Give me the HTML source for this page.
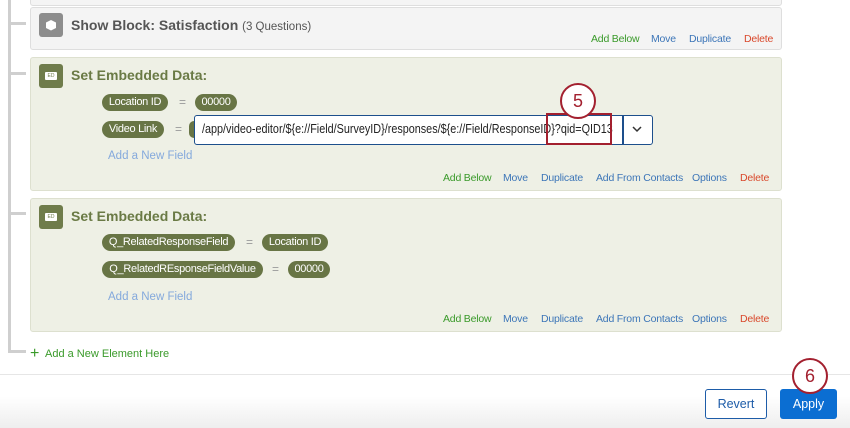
<!DOCTYPE html>
<html><head><style>
body{margin:0;width:850px;height:427px;overflow:hidden;background:#fff;font-family:"Liberation Sans",sans-serif;position:relative}
.a{position:absolute}
.blk{position:absolute;left:30px;width:750px;border:1px solid #dcdcd4;border-radius:3px}
.g{background:#f4f4f4;border-color:#dedede}
.e{background:#eef0e5;border-color:#dde0cf}
.ic{position:absolute;left:8px;width:24px;height:24px;border-radius:3px}
.t{position:absolute;left:40px;font-size:14px;font-weight:bold}
.pill{position:absolute;height:17px;line-height:17px;background:#687545;color:#fff;font-size:11px;letter-spacing:-0.3px;border-radius:9px;text-align:center;white-space:nowrap;overflow:hidden}
.eq{position:absolute;color:#999;font-size:12px}
.lk{position:absolute;font-size:10.5px;white-space:nowrap;letter-spacing:-0.2px}
.gr{color:#3a9a2a}.bl{color:#3d76b8}.rd{color:#d9482b}
.anf{position:absolute;left:77px;color:#84a9dc;font-size:11.5px}
.circ{position:absolute;width:32px;height:32px;border:2.5px solid #a3202f;border-radius:50%;background:#fff;color:#a3202f;font-size:18px;text-align:center;line-height:32px}
</style></head><body>
<div class="a" style="left:8px;top:0;width:3px;height:352px;background:#cfcfcf"></div>
<div class="a" style="left:8px;top:350px;width:18px;height:3px;background:#cfcfcf"></div>
<div class="a" style="left:10px;top:22px;width:16px;height:3px;background:#cfcfcf"></div>
<div class="a" style="left:10px;top:72px;width:16px;height:3px;background:#cfcfcf"></div>
<div class="a" style="left:10px;top:212px;width:16px;height:3px;background:#cfcfcf"></div>
<div class="blk g" style="top:-10px;height:14px"></div>

<div class="blk g" style="top:7px;height:41px">
 <div class="ic" style="top:5px;background:#8d8d8d"><svg width="24" height="24"><path d="M12 7l5 2.5v5.5L12 17.5 7 15V9.5z" fill="#fff"/></svg></div>
 <div class="t" style="top:9px;color:#555">Show Block: Satisfaction <span style="font-weight:normal;font-size:11.5px">(3 Questions)</span></div>
 <span class="lk gr" style="left:560px;top:25px">Add Below</span><span class="lk bl" style="left:620px;top:25px">Move</span><span class="lk bl" style="left:658px;top:25px">Duplicate</span><span class="lk rd" style="left:713px;top:25px">Delete</span>
</div>

<div class="blk e" style="top:57px;height:132px">
 <div class="ic" style="top:6px;background:#6f7c4b"><div style="position:absolute;left:6px;top:8px;width:12px;height:8px;background:#fff;border-radius:1px;font-size:5px;color:#6f7c4b;text-align:center;line-height:8px">ED</div></div>
 <div class="t" style="top:9px;color:#6a7a45">Set Embedded Data:</div>
 <div class="pill" style="left:71px;top:36px;width:66px">Location ID</div><span class="eq" style="left:148px;top:37px">=</span><div class="pill" style="left:164px;top:36px;width:42px">00000</div>
 <div class="pill" style="left:71px;top:63px;width:62px">Video Link</div><span class="eq" style="left:144px;top:64px">=</span><div class="pill" style="left:158px;top:63px;width:10px"></div>
 <span class="anf" style="top:92px">Add a New Field</span>
 <span class="lk gr" style="left:412px;top:114px">Add Below</span><span class="lk bl" style="left:472px;top:114px">Move</span><span class="lk bl" style="left:510px;top:114px">Duplicate</span><span class="lk bl" style="left:565px;top:114px">Add From Contacts</span><span class="lk bl" style="left:661px;top:114px">Options</span><span class="lk rd" style="left:709px;top:114px">Delete</span>
</div>
<div class="a" style="left:194px;top:115px;width:457px;height:28px;border:1.5px solid #1d4f8c;border-radius:3px;background:#fff"></div>
<div class="a" style="left:622px;top:116px;width:1.5px;height:28px;background:#1d4f8c"></div>
<div class="a" style="left:202px;top:122px;font-size:12.5px;color:#222;white-space:nowrap;transform:scaleX(0.865);transform-origin:0 0">/app/video-editor/${e://Field/SurveyID}/responses/${e://Field/ResponseID}?qid=QID13</div>
<svg class="a" style="left:631px;top:123px" width="12" height="12"><path d="M2 4l4 4 4-4" stroke="#333" stroke-width="1.5" fill="none"/></svg>
<div class="a" style="left:546px;top:113px;width:62px;height:28px;border:2.5px solid #a3202f"></div>
<div class="circ" style="left:560px;top:83px">5</div>

<div class="blk e" style="top:198px;height:132px">
 <div class="ic" style="top:6px;background:#6f7c4b"><div style="position:absolute;left:6px;top:8px;width:12px;height:8px;background:#fff;border-radius:1px;font-size:5px;color:#6f7c4b;text-align:center;line-height:8px">ED</div></div>
 <div class="t" style="top:9px;color:#6a7a45">Set Embedded Data:</div>
 <div class="pill" style="left:71px;top:35px;width:133px">Q_RelatedResponseField</div><span class="eq" style="left:215px;top:36px">=</span><div class="pill" style="left:231px;top:35px;width:66px">Location ID</div>
 <div class="pill" style="left:71px;top:62px;width:161px">Q_RelatedREsponseFieldValue</div><span class="eq" style="left:241px;top:63px">=</span><div class="pill" style="left:257px;top:62px;width:42px">00000</div>
 <span class="anf" style="top:92px">Add a New Field</span>
 <span class="lk gr" style="left:412px;top:114px">Add Below</span><span class="lk bl" style="left:472px;top:114px">Move</span><span class="lk bl" style="left:510px;top:114px">Duplicate</span><span class="lk bl" style="left:565px;top:114px">Add From Contacts</span><span class="lk bl" style="left:661px;top:114px">Options</span><span class="lk rd" style="left:709px;top:114px">Delete</span>
</div>

<div class="a" style="left:30px;top:346px;color:#3a9a2a;font-size:16px;line-height:16px">+</div>
<div class="a" style="left:45px;top:348px;color:#3a9a2a;font-size:11px">Add a New Element Here</div>

<div class="a" style="left:0;top:374px;width:850px;height:53px;border-top:1px solid #e6e6e6;background:linear-gradient(#fff 40%,#eee)"></div>
<div class="a" style="left:705px;top:389px;width:60px;height:28px;border:1px solid #1d5ca8;border-radius:3px;background:#fff;color:#1d5ca8;font-size:12.5px;text-align:center;line-height:28px">Revert</div>
<div class="a" style="left:780px;top:389px;width:57px;height:30px;border-radius:3px;background:#0b6ed2;color:#fff;font-size:12.5px;text-align:center;line-height:30px">Apply</div>
<div class="circ" style="left:792px;top:358px">6</div>
</body></html>
